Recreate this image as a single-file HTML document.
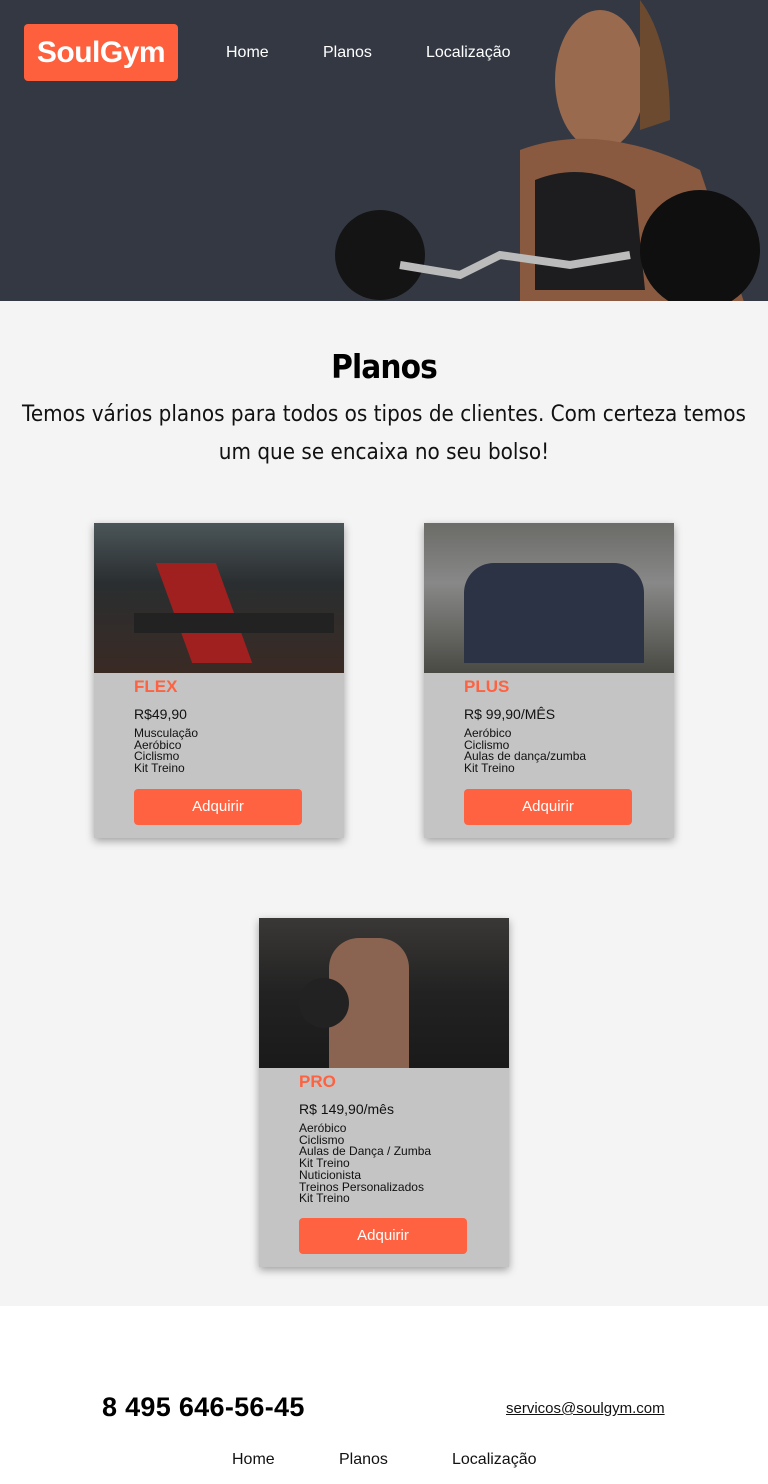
<!DOCTYPE html>
<html><head><meta charset="utf-8"><style>
*{margin:0;padding:0;box-sizing:border-box}
body{width:768px;height:1484px;position:relative;background:#fff;font-family:"Liberation Sans",sans-serif;overflow:hidden}
.hdr{position:absolute;left:0;top:0;width:768px;height:301px;background:#343842;overflow:hidden}
.logo{position:absolute;left:24px;top:24px;width:154px;height:57px;background:#fe5f3c;border-radius:4px;color:#fff;font-weight:bold;font-size:30px;line-height:57px;text-align:center;letter-spacing:-0.5px}
.nav a{position:absolute;top:44px;color:#fff;font-size:16px;text-decoration:none}
main{position:absolute;left:0;top:301px;width:768px;height:1005px;background:#f4f4f4;overflow:hidden}
h1{position:absolute;top:46px;width:100%;text-align:center;font-size:33px;font-family:"DejaVu Sans",sans-serif;font-weight:bold;letter-spacing:-1px;transform:scaleX(.9)}
.lead{position:absolute;top:95px;left:-66px;width:900px;text-align:center;font-size:22px;line-height:38px;color:#111;font-family:"DejaVu Sans",sans-serif;white-space:nowrap;transform:scaleX(.91)}
.card{position:absolute;width:250px;background:#c4c4c4;box-shadow:0 3px 8px rgba(0,0,0,.35)}
.img{height:150px;position:relative;overflow:hidden}
.card .t{position:absolute;left:40px;color:#fe6240;font-weight:bold;font-size:17px}
.card .p{position:absolute;left:40px;font-size:14px;color:#111}
.card ul{position:absolute;left:40px;list-style:none;font-size:12px;line-height:11.7px;color:#111}
.btn{position:absolute;left:40px;width:168px;height:36px;background:#fe6240;border-radius:4px;color:#fff;font-size:15px;text-align:center;line-height:36px}
.ft{position:absolute;top:1306px;left:0;width:768px;height:178px;background:#fff}
</style></head><body>
<div class="hdr">
<svg width="768" height="301" style="position:absolute;left:0;top:0">
<ellipse cx="600" cy="80" rx="45" ry="70" fill="#9a6a4f"/>
<path d="M640 0 q30 40 30 120 l-30 10z" fill="#6b4a30"/>
<path d="M520 150 q80 -30 180 20 l50 150 h-230z" fill="#8a5a40"/>
<path d="M535 180 q50 -20 100 10 l10 100 h-110z" fill="#1d1d1f"/>
<circle cx="380" cy="255" r="45" fill="#141414"/>
<circle cx="700" cy="250" r="60" fill="#0f0f0f"/>
<path d="M400 265 l60 10 l40 -20 l70 10 l60 -10" stroke="#bbb" stroke-width="8" fill="none"/>
</svg>
<div class="logo">SoulGym</div>
<div class="nav"><a style="left:226px">Home</a><a style="left:323px">Planos</a><a style="left:426px">Localização</a></div>
</div>
<main>
<h1>Planos</h1>
<div class="lead">Temos vários planos para todos os tipos de clientes. Com certeza temos<br>um que se encaixa no seu bolso!</div>
<div class="card" style="left:94px;top:222px;height:315px">
<div class="img" style="background:linear-gradient(180deg,#4b5558 0%,#2a2e30 40%,#3a2a24 100%)"><div style="position:absolute;left:80px;top:40px;width:60px;height:100px;background:#a02020;transform:skewX(20deg)"></div><div style="position:absolute;left:40px;top:90px;width:200px;height:20px;background:#222"></div></div>
<div class="t" style="top:154px">FLEX</div>
<div class="p" style="top:183px">R$49,90</div>
<ul style="top:205px"><li>Musculação</li><li>Aeróbico</li><li>Ciclismo</li><li>Kit Treino</li></ul>
<div class="btn" style="top:266px">Adquirir</div>
</div>
<div class="card" style="left:424px;top:222px;height:315px">
<div class="img" style="background:linear-gradient(180deg,#6b6b68 0%,#888 40%,#4a4a44 100%)"><div style="position:absolute;left:40px;top:40px;width:180px;height:100px;background:#2c3345;border-radius:30px 30px 0 0"></div></div>
<div class="t" style="top:154px">PLUS</div>
<div class="p" style="top:183px">R$ 99,90/MÊS</div>
<ul style="top:205px"><li>Aeróbico</li><li>Ciclismo</li><li>Aulas de dança/zumba</li><li>Kit Treino</li></ul>
<div class="btn" style="top:266px">Adquirir</div>
</div>
<div class="card" style="left:259px;top:617px;height:349px">
<div class="img" style="background:linear-gradient(180deg,#3a3836 0%,#222 50%,#1a1a1a 100%)"><div style="position:absolute;left:70px;top:20px;width:80px;height:130px;background:#8a6450;border-radius:30px 30px 0 0"></div><div style="position:absolute;left:40px;top:60px;width:50px;height:50px;border-radius:50%;background:#222"></div></div>
<div class="t" style="top:154px">PRO</div>
<div class="p" style="top:183px">R$ 149,90/mês</div>
<ul style="top:205px"><li>Aeróbico</li><li>Ciclismo</li><li>Aulas de Dança / Zumba</li><li>Kit Treino</li><li>Nuticionista</li><li>Treinos Personalizados</li><li>Kit Treino</li></ul>
<div class="btn" style="top:300px">Adquirir</div>
</div>
</main>
<div class="ft">
<div style="position:absolute;left:102px;top:86px;font-size:27px;font-weight:bold;color:#000;letter-spacing:0.3px">8 495 646-56-45</div>
<div style="position:absolute;left:506px;top:94px;font-size:15px;text-decoration:underline;color:#111">servicos@soulgym.com</div>
<div style="position:absolute;left:232px;top:145px;font-size:16px;color:#111">Home</div>
<div style="position:absolute;left:339px;top:145px;font-size:16px;color:#111">Planos</div>
<div style="position:absolute;left:452px;top:145px;font-size:16px;color:#111">Localização</div>
</div>
</body></html>
